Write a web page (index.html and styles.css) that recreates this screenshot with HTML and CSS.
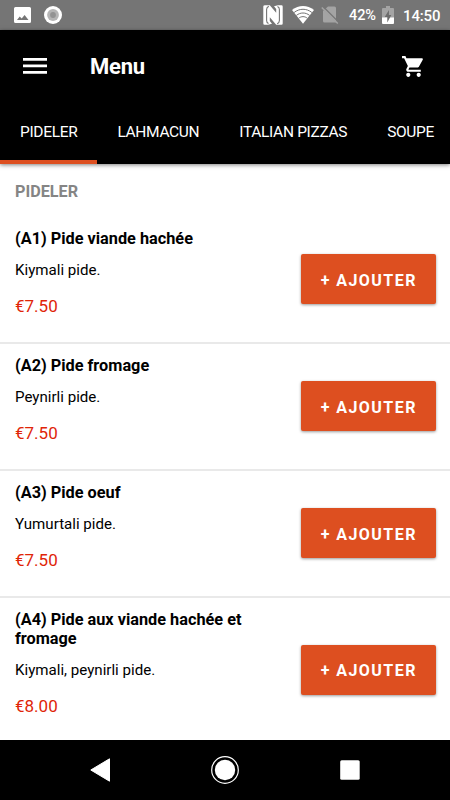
FILE: index.html
```html
<!DOCTYPE html>
<html lang="fr">
<head>
<meta charset="utf-8">
<meta name="viewport" content="width=device-width">
<title>Menu</title>
<link rel="stylesheet" href="styles.css">
</head>
<body>
<div class="screen">
  <div class="status">
    <svg class="i-photo" width="17" height="17" viewBox="0 0 17 17"><path fill="#fff" fill-rule="evenodd" d="M1.500 0h14A1.500 1.500 0 0 1 17 1.500v13a1.500 1.500 0 0 1-1.500 1.500h-14A1.500 1.500 0 0 1 0 14.500v-13A1.500 1.500 0 0 1 1.500 0ZM3 13h11.500L10.600 8 7.700 11.500 5.700 9.400Z"/></svg>
    <svg class="i-disc" width="18" height="18" viewBox="0 0 18 18"><circle cx="9" cy="9" r="9" fill="#fff"/><circle cx="9" cy="9" r="5.900" fill="#b5b5b5"/><circle cx="9" cy="9" r="2.900" fill="#939393"/></svg>
    <span class="spacer"></span>
    <svg class="i-nfc" width="20" height="20" viewBox="0 0 20 20"><path fill="#fff" d="M2 .3H6.800L13.200 7.800V4L11 1.200 15 .3H18.500Q19.700.3 19.700 1.500V18.500Q19.700 19.700 18.500 19.700H13.200L6.800 12.200V16L9 18.800 5 19.700H1.500Q.3 19.700.3 18.500V1.500Q.3.3 2 .3Z"/><path fill="none" stroke="#757575" stroke-width="1.100" d="M5.800 1.200Q3.600 2.200 3.600 4.500V15.500Q3.600 17.800 5.500 18.600M14.200 18.800Q16.400 17.800 16.400 15.500V4.500Q16.400 2.200 14.500 1.400"/></svg>
    <svg class="i-wifi" width="22" height="18" viewBox="0 0 22 18"><path fill="#fff" d="M0 4.100C6.600-1.300 15.400-1.300 22 4.100L11 17.800Z"/><g fill="none" stroke="#757575" stroke-width="1"><path d="M2.100 6.500C7.500 2.200 14.500 2.200 19.900 6.500M4.400 9.400C8.400 6.200 13.600 6.200 17.600 9.400M6.700 12.200C9.300 10.100 12.700 10.100 15.300 12.200"/></g></svg>
    <svg class="i-sim" width="18" height="18" viewBox="0 0 18 18"><path fill="#a4a4a4" d="M7 .5h6.500A1.500 1.500 0 0 1 15 2v14.500H3.500A1.500 1.500 0 0 1 2 15V5Z"/><path stroke="#757575" stroke-width="1.200" d="M2 .5 17.500 16"/><path stroke="#a4a4a4" stroke-width="1.500" d="M.8 1.500 16.800 17.500"/></svg>
    <span class="percent">42%</span>
    <svg class="i-batt" width="12" height="19" viewBox="0 0 12 19"><path fill="#a4a4a4" d="M4 0h4v2h3q1 0 1 1v9H0V3q0-1 1-1h3Z"/><path fill="#fff" d="M0 11.500h12V17q0 1-1 1H1q-1 0-1-1Z"/><path fill="#6c6c6c" d="M7 4 2.700 11H5.300V16.500L9.300 9H6.900Z"/></svg>
    <span class="clock">14:50</span>
  </div>
  <header class="header">
    <div class="bar">
      <svg class="i-menu" width="24" height="16" viewBox="0 0 24 16"><path fill="#fff" d="M0 0h24v2.700H0zM0 6.500h24v2.700H0zM0 13h24v2.700H0z"/></svg>
      <h1 class="title">Menu</h1>
      <svg class="i-cart" width="25" height="25" viewBox="0 0 24 24"><path fill="#fff" d="M7 18c-1.100 0-1.990.9-1.990 2S5.900 22 7 22s2-.9 2-2-.9-2-2-2zM1 2v2h2l3.600 7.590-1.350 2.450c-.16.280-.25.610-.25.960 0 1.100.9 2 2 2h12v-2H7.420c-.14 0-.25-.11-.25-.25l.03-.12.900-1.630h7.450c.75 0 1.410-.41 1.750-1.030l3.580-6.490c.08-.14.120-.31.120-.48 0-.55-.45-1-1-1H5.210l-.94-2H1zm16 16c-1.100 0-1.990.9-1.990 2s.89 2 1.990 2 2-.9 2-2-.9-2-2-2z"/></svg>
    </div>
    <nav class="tabs">
      <a class="tab active">PIDELER</a><a class="tab">LAHMACUN</a><a class="tab">ITALIAN PIZZAS</a><a class="tab">SOUPE</a>
    </nav>
  </header>
  <main class="list">
    <h2 class="section">PIDELER</h2>
    <article class="item"><div class="info"><h3 class="name">(A1) Pide viande hachée</h3><p class="desc">Kiymali pide.</p><p class="price">€7.50</p></div><button class="add">+ AJOUTER</button></article>
    <article class="item"><div class="info"><h3 class="name">(A2) Pide fromage</h3><p class="desc">Peynirli pide.</p><p class="price">€7.50</p></div><button class="add">+ AJOUTER</button></article>
    <article class="item"><div class="info"><h3 class="name">(A3) Pide oeuf</h3><p class="desc">Yumurtali pide.</p><p class="price">€7.50</p></div><button class="add">+ AJOUTER</button></article>
    <article class="item"><div class="info"><h3 class="name">(A4) Pide aux viande hachée et fromage</h3><p class="desc">Kiymali, peynirli pide.</p><p class="price">€8.00</p></div><button class="add">+ AJOUTER</button></article>
  </main>
  <footer class="nav">
    <svg width="20" height="24" viewBox="0 0 20 24"><path fill="#fff" stroke="#fff" stroke-linejoin="round" d="M.8 12 19.500 .8V23.200Z"/></svg>
    <svg width="28" height="28" viewBox="0 0 28 28"><circle cx="14" cy="14" r="13.300" fill="none" stroke="#fff" stroke-width="1.200"/><circle cx="14" cy="14" r="10.200" fill="#fff"/></svg>
    <svg width="20" height="20" viewBox="0 0 20 20"><rect width="19.500" height="19.500" x=".2" y=".2" rx="1.500" fill="#fff"/></svg>
  </footer>
</div>
</body>
</html>
```
FILE: styles.css
```css
* { box-sizing: border-box; }
body { margin: 0; background: #fff; color: #000; font-family: Roboto, sans-serif; }
h1, h2, h3, p { margin: 0; }
svg { display: block; flex: none; }
.screen { width: 450px; height: 800px; display: flex; flex-direction: column; overflow: hidden; }
.status { height: 30px; flex: none; display: flex; align-items: center; padding: 0 10px 0 14px; background: #757575; color: #fff; font-size: 15px; font-weight: 500; line-height: 30px; }
.spacer { flex: 1; }
.i-disc { margin-left: 13px; }
.i-wifi { margin-left: 9px; }
.i-sim { margin-left: 7px; }
.percent { margin-left: 10px; width: 28px; font-size: 14.500px; letter-spacing: -.1px; white-space: nowrap; padding-top: 1px; }
.i-batt { margin-left: 5px; }
.clock { margin-left: 9px; width: 37px; white-space: nowrap; letter-spacing: -.15px; padding-top: 1px; }
.header { height: 134px; flex: none; background: #000; color: #fff; box-shadow: 0 1px 4px rgba(0, 0, 0, .5); position: relative; }
.bar { height: 72px; display: flex; align-items: center; padding: 0 24px 0 23px; }
.title { margin-left: 43px; padding-top: 1px; flex: 1; font-size: 22px; letter-spacing: -.2px; line-height: 30px; font-weight: 700; }
.tabs { height: 62px; display: flex; overflow: hidden; }
.tab { flex: none; height: 62px; padding: 1px 20px 0; font-size: 15.500px; letter-spacing: -.33px; line-height: 58px; white-space: nowrap; }
.active { border-bottom: 4px solid #dd4f20; }
.list { flex: 1; min-height: 0; overflow: hidden; }
.section { height: 52.500px; padding: 14.500px 15px 0; font-size: 16.200px; line-height: 26px; color: #858585; font-weight: 700; }
.item { display: flex; align-items: center; justify-content: space-between; border-bottom: 1.500px solid #e9e9e9; padding: 12.500px 14px 25px 15px; }
.item { border-bottom-width: 2px; padding-bottom: 24.500px; }
.info { width: 250px; }
.name { font-size: 16.300px; line-height: 19px; font-weight: 700; }
.desc { margin-top: 12px; font-size: 15.100px; line-height: 20px; }
.price { margin-top: 15px; font-size: 17px; line-height: 22px; color: #e02507; }
.add { flex: none; width: 135.500px; height: 50px; margin-top: 12px; padding: 3px 0 0 1px; border: 0; border-radius: 2px; background: #dd4f20; color: #fff; font: 700 16px/20px Roboto, sans-serif; letter-spacing: 1.450px; box-shadow: 0 1px 3px rgba(0, 0, 0, .4); }
.nav { height: 60px; flex: none; display: flex; justify-content: space-between; align-items: center; padding: 0 90px; background: #000; }
```
